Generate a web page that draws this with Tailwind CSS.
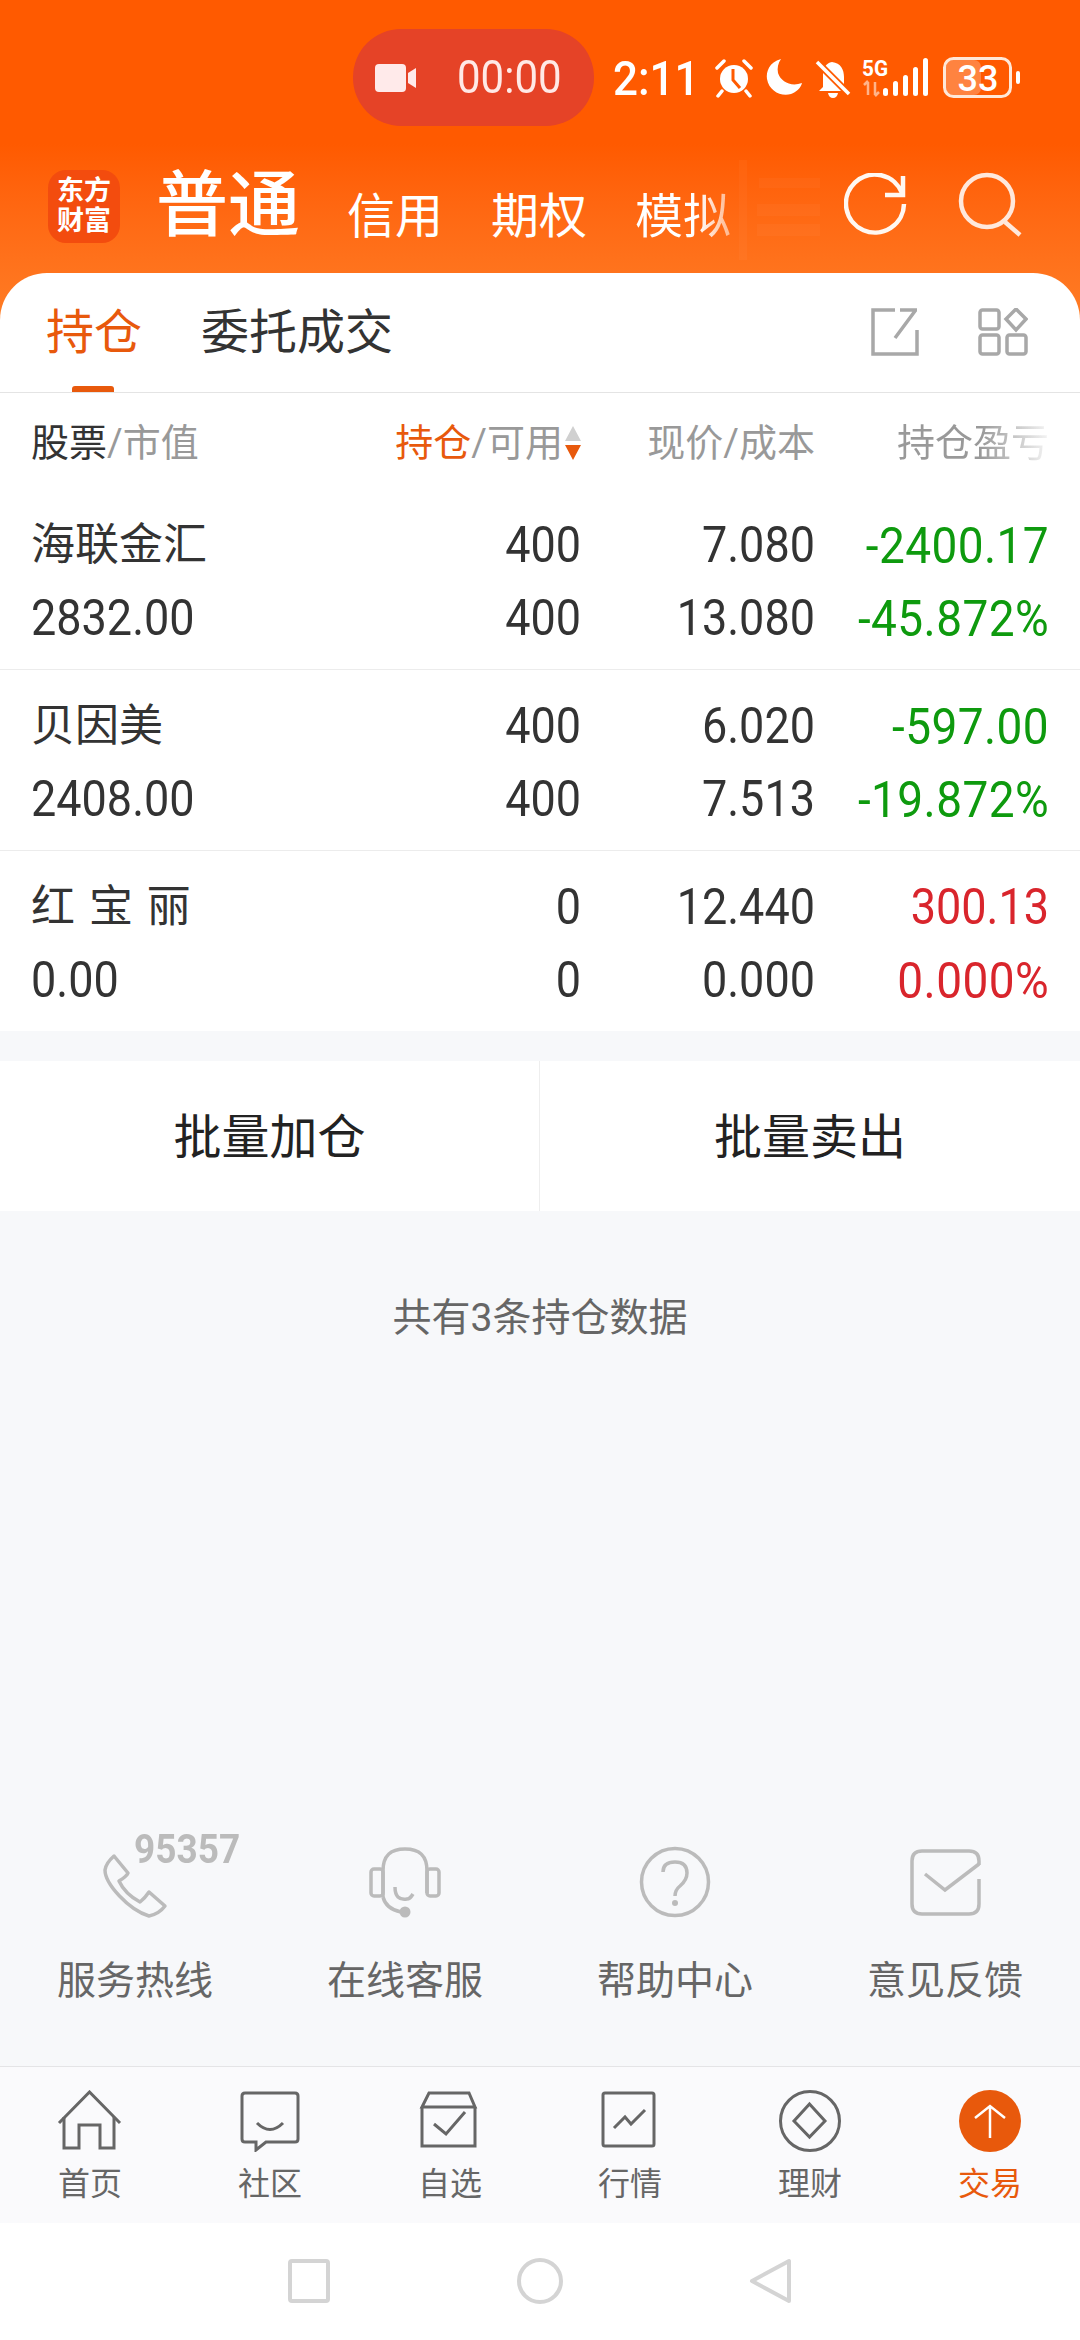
<!DOCTYPE html>
<html lang="zh-CN">
<head>
  <meta charset="UTF-8" />
  <meta name="viewport" content="width=device-width, initial-scale=1.0" />
  <title>交易</title>
  <script src="https://cdn.jsdelivr.net/npm/@tailwindcss/browser@4"></script>
</head>
<body class="w-[1080px] h-[2340px] overflow-hidden bg-white text-[#333] font-[Roboto,'Noto_Sans_CJK_SC',sans-serif]">

  <!-- Orange header -->
  <header class="relative h-[320px] bg-linear-to-b from-[#ff5a00] from-45% to-[#ff7c24] text-white">
    <!-- faint watermark behind the tabs -->
    <svg class="absolute left-[735px] top-[160px]" width="90" height="110" viewBox="0 0 90 110" fill="#fff" fill-opacity="0.03">
      <rect x="4" y="0" width="8" height="100"/>
      <rect x="24" y="18" width="61" height="10"/>
      <rect x="22" y="44" width="63" height="12"/>
      <rect x="22" y="64" width="63" height="12"/>
    </svg>

    <!-- Status bar -->
    <div class="relative flex items-center h-[126px] pt-[29px]">
      <div class="ml-[353px] w-[241px] h-[97px] rounded-[48px] bg-[#e54327] flex items-center text-[#ffe9e6]">
        <svg class="ml-[22px]" width="42" height="28" viewBox="0 0 42 28" fill="#ffeaea">
          <rect x="0" y="0" width="31" height="28" rx="4"/>
          <path d="M33 9 L41 4 V24 L33 19Z"/>
        </svg>
        <span class="ml-[40px] text-[42px] leading-none scale-y-110">00:00</span>
      </div>
      <span class="ml-[19px] w-[82px] text-[44px] leading-none font-medium scale-y-110">2:11</span>
      <svg class="ml-[20px]" width="310" height="46" viewBox="0 0 310 46">
        <!-- alarm -->
        <g transform="translate(0,4)">
          <circle cx="19" cy="20" r="14" fill="#fff"/>
          <path d="M18 10 V21 L25 29" stroke="#ff5a00" stroke-width="3" fill="none"/>
          <path d="M2 9 L9 2 M36 9 L29 2 M7 32 L3 37 M31 32 L35 37" stroke="#fff" stroke-width="3.5" stroke-linecap="round"/>
        </g>
        <!-- moon -->
        <path d="M66 4 C54 7 51 17 52 24 C54 36 66 42 76 39 C81 37 86 33 87 28 C76 32 66 27 63 18 C62 13 63 8 66 4Z" fill="#fff"/>
        <!-- bell, muted -->
        <g transform="translate(102,4)">
          <path d="M15 3 C24 4 27 11 27 18 V27 L31 32 H2 L6 28 V15 C6 9 9 4 15 3Z" fill="#fff"/>
          <path d="M11 34 H21 Q20 39 16 39 Q12 39 11 34Z" fill="#fff"/>
          <path d="M0 3 L32 35" stroke="#ff5a00" stroke-width="7"/>
          <path d="M0 3 L32 35" stroke="#fff" stroke-width="3.5"/>
        </g>
        <!-- 5G and signal -->
        <text x="147" y="21" font-family="Roboto" font-size="22" font-weight="700" fill="#fff" textLength="26" lengthAdjust="spacingAndGlyphs">5G</text>
        <path d="M153 27 V40 M149 30 L153 26 M160 27 V40 M164 37 L160 41" stroke="#ffb48a" stroke-width="2.5" fill="none"/>
        <g fill="#fff">
          <rect x="168" y="33" width="5" height="8" rx="2.5"/>
          <rect x="178" y="26" width="5" height="15" rx="2.5"/>
          <rect x="188" y="20" width="5" height="21" rx="2.5"/>
          <rect x="198" y="12" width="5" height="29" rx="2.5"/>
          <rect x="208" y="3" width="5" height="38" rx="2.5"/>
        </g>
        <!-- battery -->
        <rect x="231" y="5" width="35" height="35" rx="7" fill="#fff" fill-opacity="0.25"/>
        <rect x="229.5" y="3.5" width="66" height="38" rx="9" fill="none" stroke="#ffe8d8" stroke-width="3"/>
        <text x="263" y="36" text-anchor="middle" font-family="Roboto" font-size="36" font-weight="500" fill="#fff">33</text>
        <rect x="301" y="16" width="4" height="13" rx="2" fill="#fff"/>
      </svg>
    </div>

    <!-- Account tabs -->
    <div class="relative flex items-center h-[68px] mt-[46px]">
      <div class="ml-[48px] w-[72px] h-[73px] shrink-0 rounded-[18px] bg-[#f34c0e] flex flex-col items-center justify-center text-[27px] leading-[30px] font-bold">
        <span>东方</span>
        <span>财富</span>
      </div>
      <span class="ml-[36px] text-[72px] leading-none font-medium">普通</span>
      <span class="ml-[47px] mt-[22px] text-[48px] leading-none">信用</span>
      <span class="ml-[48px] mt-[22px] text-[48px] leading-none">期权</span>
      <span class="ml-[48px] mt-[22px] text-[48px] leading-none bg-linear-to-r from-white from-65% to-white/50 bg-clip-text text-transparent">模拟</span>
      <svg class="ml-[113px]" width="64" height="66" viewBox="0 0 64 66" fill="none" stroke="#fff8f2" stroke-width="4.5">
        <path d="M58 20 A29 29 0 1 0 60 31"/>
        <path d="M59 3 V22 H41"/>
      </svg>
      <svg class="ml-[47px]" width="70" height="70" viewBox="0 0 70 70" fill="none" stroke="#ffe8dc" stroke-width="4.5">
        <circle cx="32" cy="30" r="26"/>
        <path d="M50 51 L65 64"/>
      </svg>
    </div>
  </header>

  <main class="relative -mt-[47px] bg-white rounded-t-[47px]">
    <!-- Tabs -->
    <div class="relative h-[120px] border-b border-[#e4e4e4] flex items-center">
      <span class="ml-[46px] text-[48px] leading-none text-[#e8590c]">持仓</span>
      <span class="ml-[59px] text-[48px] leading-none text-[#333]">委托成交</span>
      <svg class="ml-auto -mt-[2px]" width="48" height="48" viewBox="0 0 48 48" fill="none" stroke="#a8a8a8" stroke-width="3.5">
        <path d="M24 2 H2 V46 H46 V22"/>
        <path d="M24 30 L44 3 M29 2 H46"/>
      </svg>
      <svg class="ml-[59px] mr-[52px] -mt-[2px]" width="50" height="48" viewBox="0 0 50 48" fill="none" stroke="#a8a8a8" stroke-width="3.5">
        <rect x="2" y="2" width="19" height="19" rx="2.5"/>
        <rect x="2" y="27" width="19" height="19" rx="2.5"/>
        <rect x="29" y="27" width="19" height="19" rx="2.5"/>
        <path d="M38 1 L48 11 L38 22 L28 11Z"/>
      </svg>
      <div class="absolute left-[72px] bottom-0 w-[42px] h-[6px] rounded-t-[3px] bg-[#e8590c]"></div>
    </div>

    <!-- Column heads -->
    <div class="grid grid-cols-[350px_200px_234px_234px] pl-[31px] h-[96px] pt-[3px] items-center text-[38px] leading-none text-[#999]">
      <div><span class="text-[#333]">股票</span>/市值</div>
      <div class="flex justify-end items-center">
        <span class="text-[#e8590c]">持仓</span><span>/可用</span>
        <svg class="ml-[1px] mr-[-1px]" width="18" height="34" viewBox="0 0 18 34">
          <path d="M9 0 L17 15 H1Z" fill="#d0d0d0"/>
          <path d="M1 19 H17 L9 34Z" fill="#e8590c"/>
        </svg>
      </div>
      <div class="text-right">现价/成本</div>
      <div class="bg-linear-to-r from-[#999] from-55% to-[#999]/10 bg-clip-text text-transparent justify-self-end">持仓盈亏</div>
    </div>

    <!-- Positions -->
    <div class="grid grid-cols-[350px_200px_234px_234px] grid-rows-[73px_73px] items-center pl-[31px] pt-[19px] pb-[15px] border-b border-[#ececec] text-[45px] leading-none">
      <div class="text-[44px]">海联金汇</div><div class="text-right scale-y-110">400</div><div class="text-right scale-y-110">7.080</div><div class="text-right scale-y-110 text-[46px] tracking-[0.4px] text-[#0e9a0e]">-2400.17</div>
      <div class="scale-y-110 origin-left">2832.00</div><div class="text-right scale-y-110">400</div><div class="text-right scale-y-110">13.080</div><div class="text-right scale-y-110 text-[46px] tracking-[0.4px] text-[#0e9a0e]">-45.872%</div>
    </div>
    <div class="grid grid-cols-[350px_200px_234px_234px] grid-rows-[73px_73px] items-center pl-[31px] pt-[19px] pb-[15px] border-b border-[#ececec] text-[45px] leading-none">
      <div class="text-[44px]">贝因美</div><div class="text-right scale-y-110">400</div><div class="text-right scale-y-110">6.020</div><div class="text-right scale-y-110 text-[46px] tracking-[0.4px] text-[#0e9a0e]">-597.00</div>
      <div class="scale-y-110 origin-left">2408.00</div><div class="text-right scale-y-110">400</div><div class="text-right scale-y-110">7.513</div><div class="text-right scale-y-110 text-[46px] tracking-[0.4px] text-[#0e9a0e]">-19.872%</div>
    </div>
    <div class="grid grid-cols-[350px_200px_234px_234px] grid-rows-[73px_73px] items-center pl-[31px] pt-[19px] pb-[15px] text-[45px] leading-none">
      <div class="text-[44px] [word-spacing:3px]">红 宝 丽</div><div class="text-right scale-y-110">0</div><div class="text-right scale-y-110">12.440</div><div class="text-right scale-y-110 text-[#d9252c]">300.13</div>
      <div class="scale-y-110 origin-left">0.00</div><div class="text-right scale-y-110">0</div><div class="text-right scale-y-110">0.000</div><div class="text-right scale-y-110 text-[46px] tracking-[0.4px] text-[#d9252c]">0.000%</div>
    </div>
  </main>

  <!-- Grey area -->
  <section class="bg-[#f7f8fa] h-[1035px] pt-[30px]">
    <div class="flex h-[150px] bg-white text-[48px] leading-none text-[#222]">
      <div class="w-[539px] pt-[3px] flex items-center justify-center">批量加仓</div>
      <div class="w-[541px] pt-[3px] border-l border-[#eeeeee] flex items-center justify-center">批量卖出</div>
    </div>

    <p class="mt-[82px] h-[50px] text-center text-[39px] leading-[50px] text-[#666]">共有3条持仓数据</p>

    <div class="grid grid-cols-4 mt-[491px] text-center text-[39px] leading-[50px] text-[#666]">
      <div class="flex flex-col items-center">
        <div class="relative w-[72px] h-[84px]">
          <svg width="72" height="84" viewBox="0 0 72 84" fill="none" stroke="#bbbbbb" stroke-width="3.5" stroke-linejoin="round">
            <g transform="translate(4,20)">
              <path d="M11 2 L25 19 Q24 22 16 27 Q22 40 37 48 Q42 44 46 38 L62 52 Q56 60 46 62 C26 56 2 30 2 16 Q3 9 11 2Z"/>
            </g>
          </svg>
          <span class="absolute left-[35px] top-0 text-[37px] leading-[27px] font-bold text-[#bbb] scale-y-110 origin-top-left">95357</span>
        </div>
        <span class="mt-[38px]">服务热线</span>
      </div>
      <div class="flex flex-col items-center">
        <svg width="72" height="84" viewBox="0 0 72 84" fill="none" stroke="#bbbbbb" stroke-width="3.5">
          <g transform="translate(0,13)">
            <path d="M14 50 V24 C14 8 22 2 36 2 C50 2 58 8 58 24 V46"/>
            <rect x="2" y="22" width="12" height="27" rx="3"/>
            <rect x="58" y="22" width="12" height="27" rx="3"/>
            <path d="M14 50 Q17 62 32 65"/>
            <path d="M26 40 Q26 54 38 52 Q41 52 44 47"/>
            <circle cx="36" cy="65" r="5.5" fill="#bbbbbb" stroke="none"/>
          </g>
        </svg>
        <span class="mt-[38px]">在线客服</span>
      </div>
      <div class="flex flex-col items-center">
        <svg width="72" height="84" viewBox="0 0 72 84" fill="none" stroke="#bbbbbb" stroke-width="3.5">
          <g transform="translate(0,12)">
            <circle cx="36" cy="36" r="33.5"/>
            <path d="M24 26 Q24 16 36 16 Q48 16 48 27 Q48 34 41 40 Q36 44 36 50"/>
            <circle cx="36" cy="57" r="3" fill="#bbbbbb" stroke="none"/>
          </g>
        </svg>
        <span class="mt-[38px]">帮助中心</span>
      </div>
      <div class="flex flex-col items-center">
        <svg width="72" height="84" viewBox="0 0 72 84" fill="none" stroke="#bbbbbb" stroke-width="3.5">
          <g transform="translate(1,15)">
            <path d="M69 30 V55 Q69 65 59 65 H12 Q2 65 2 55 V12 Q2 2 12 2 H59 Q69 2 69 12 V16"/>
            <path d="M15 25 L35 41 L69 15"/>
          </g>
        </svg>
        <span class="mt-[38px]">意见反馈</span>
      </div>
    </div>
  </section>

  <!-- Bottom nav -->
  <nav class="h-[157px] border-t border-[#e4e4e6] bg-[#fafafc] grid grid-cols-6 pt-[23px] text-center text-[32px] leading-[36px] text-[#666]">
    <div class="flex flex-col items-center">
      <svg width="70" height="62" viewBox="0 0 70 62" fill="none" stroke="#666" stroke-width="3">
        <path d="M4 33 L34.5 2 L65 33"/>
        <path d="M9 27 V58 H24 V35 H45 V58 H59 V27"/>
      </svg>
      <span class="mt-[14px]">首页</span>
    </div>
    <div class="flex flex-col items-center">
      <svg width="70" height="62" viewBox="0 0 70 62" fill="none" stroke="#666" stroke-width="3">
        <path d="M10 3 H60 Q63 3 63 6 V49 Q63 52 60 52 H31 L21 60 V52 H10 Q7 52 7 49 V6 Q7 3 10 3Z"/>
        <path d="M22 33 Q35 46 48 33"/>
      </svg>
      <span class="mt-[14px]">社区</span>
    </div>
    <div class="flex flex-col items-center">
      <svg width="70" height="62" viewBox="0 0 70 62" fill="none" stroke="#666" stroke-width="3">
        <path d="M14 3 H54 L60 17 H7Z"/>
        <path d="M7 17 V56 H60 V17"/>
        <path d="M19 34 L31 44 L50 22"/>
      </svg>
      <span class="mt-[14px]">自选</span>
    </div>
    <div class="flex flex-col items-center">
      <svg width="70" height="62" viewBox="0 0 70 62" fill="none" stroke="#666" stroke-width="3">
        <rect x="8" y="3" width="51" height="53" rx="2"/>
        <path d="M19 38 L30 27 L36 34 L50 20"/>
      </svg>
      <span class="mt-[14px]">行情</span>
    </div>
    <div class="flex flex-col items-center">
      <svg width="70" height="62" viewBox="0 0 70 62" fill="none" stroke="#666" stroke-width="3">
        <circle cx="35" cy="31" r="29.5"/>
        <path d="M34.5 14 L50 31 L34.5 47 L19 31Z"/>
      </svg>
      <span class="mt-[14px]">理财</span>
    </div>
    <div class="flex flex-col items-center text-[#e8590c]">
      <svg width="70" height="62" viewBox="0 0 70 62" fill="none" stroke="#fff" stroke-width="2.5">
        <circle cx="35" cy="31" r="31" fill="#e8590c" stroke="none"/>
        <path d="M35 16 V48 M20 28 L35 16 L50 28"/>
      </svg>
      <span class="mt-[14px]">交易</span>
    </div>
  </nav>

  <!-- System nav -->
  <div class="h-[116px] bg-white flex items-center justify-center gap-[185px]">
    <svg width="46" height="46" viewBox="0 0 46 46" fill="none" stroke="#d4d4d4" stroke-width="4">
      <rect x="4" y="3" width="38" height="40" rx="2"/>
    </svg>
    <svg width="46" height="46" viewBox="0 0 46 46" fill="none" stroke="#d4d4d4" stroke-width="4">
      <circle cx="23" cy="23" r="21"/>
    </svg>
    <svg width="46" height="46" viewBox="0 0 46 46" fill="none" stroke="#d4d4d4" stroke-width="4" stroke-linejoin="round">
      <path d="M41 3 V43 L4 23Z"/>
    </svg>
  </div>
</body>
</html>
